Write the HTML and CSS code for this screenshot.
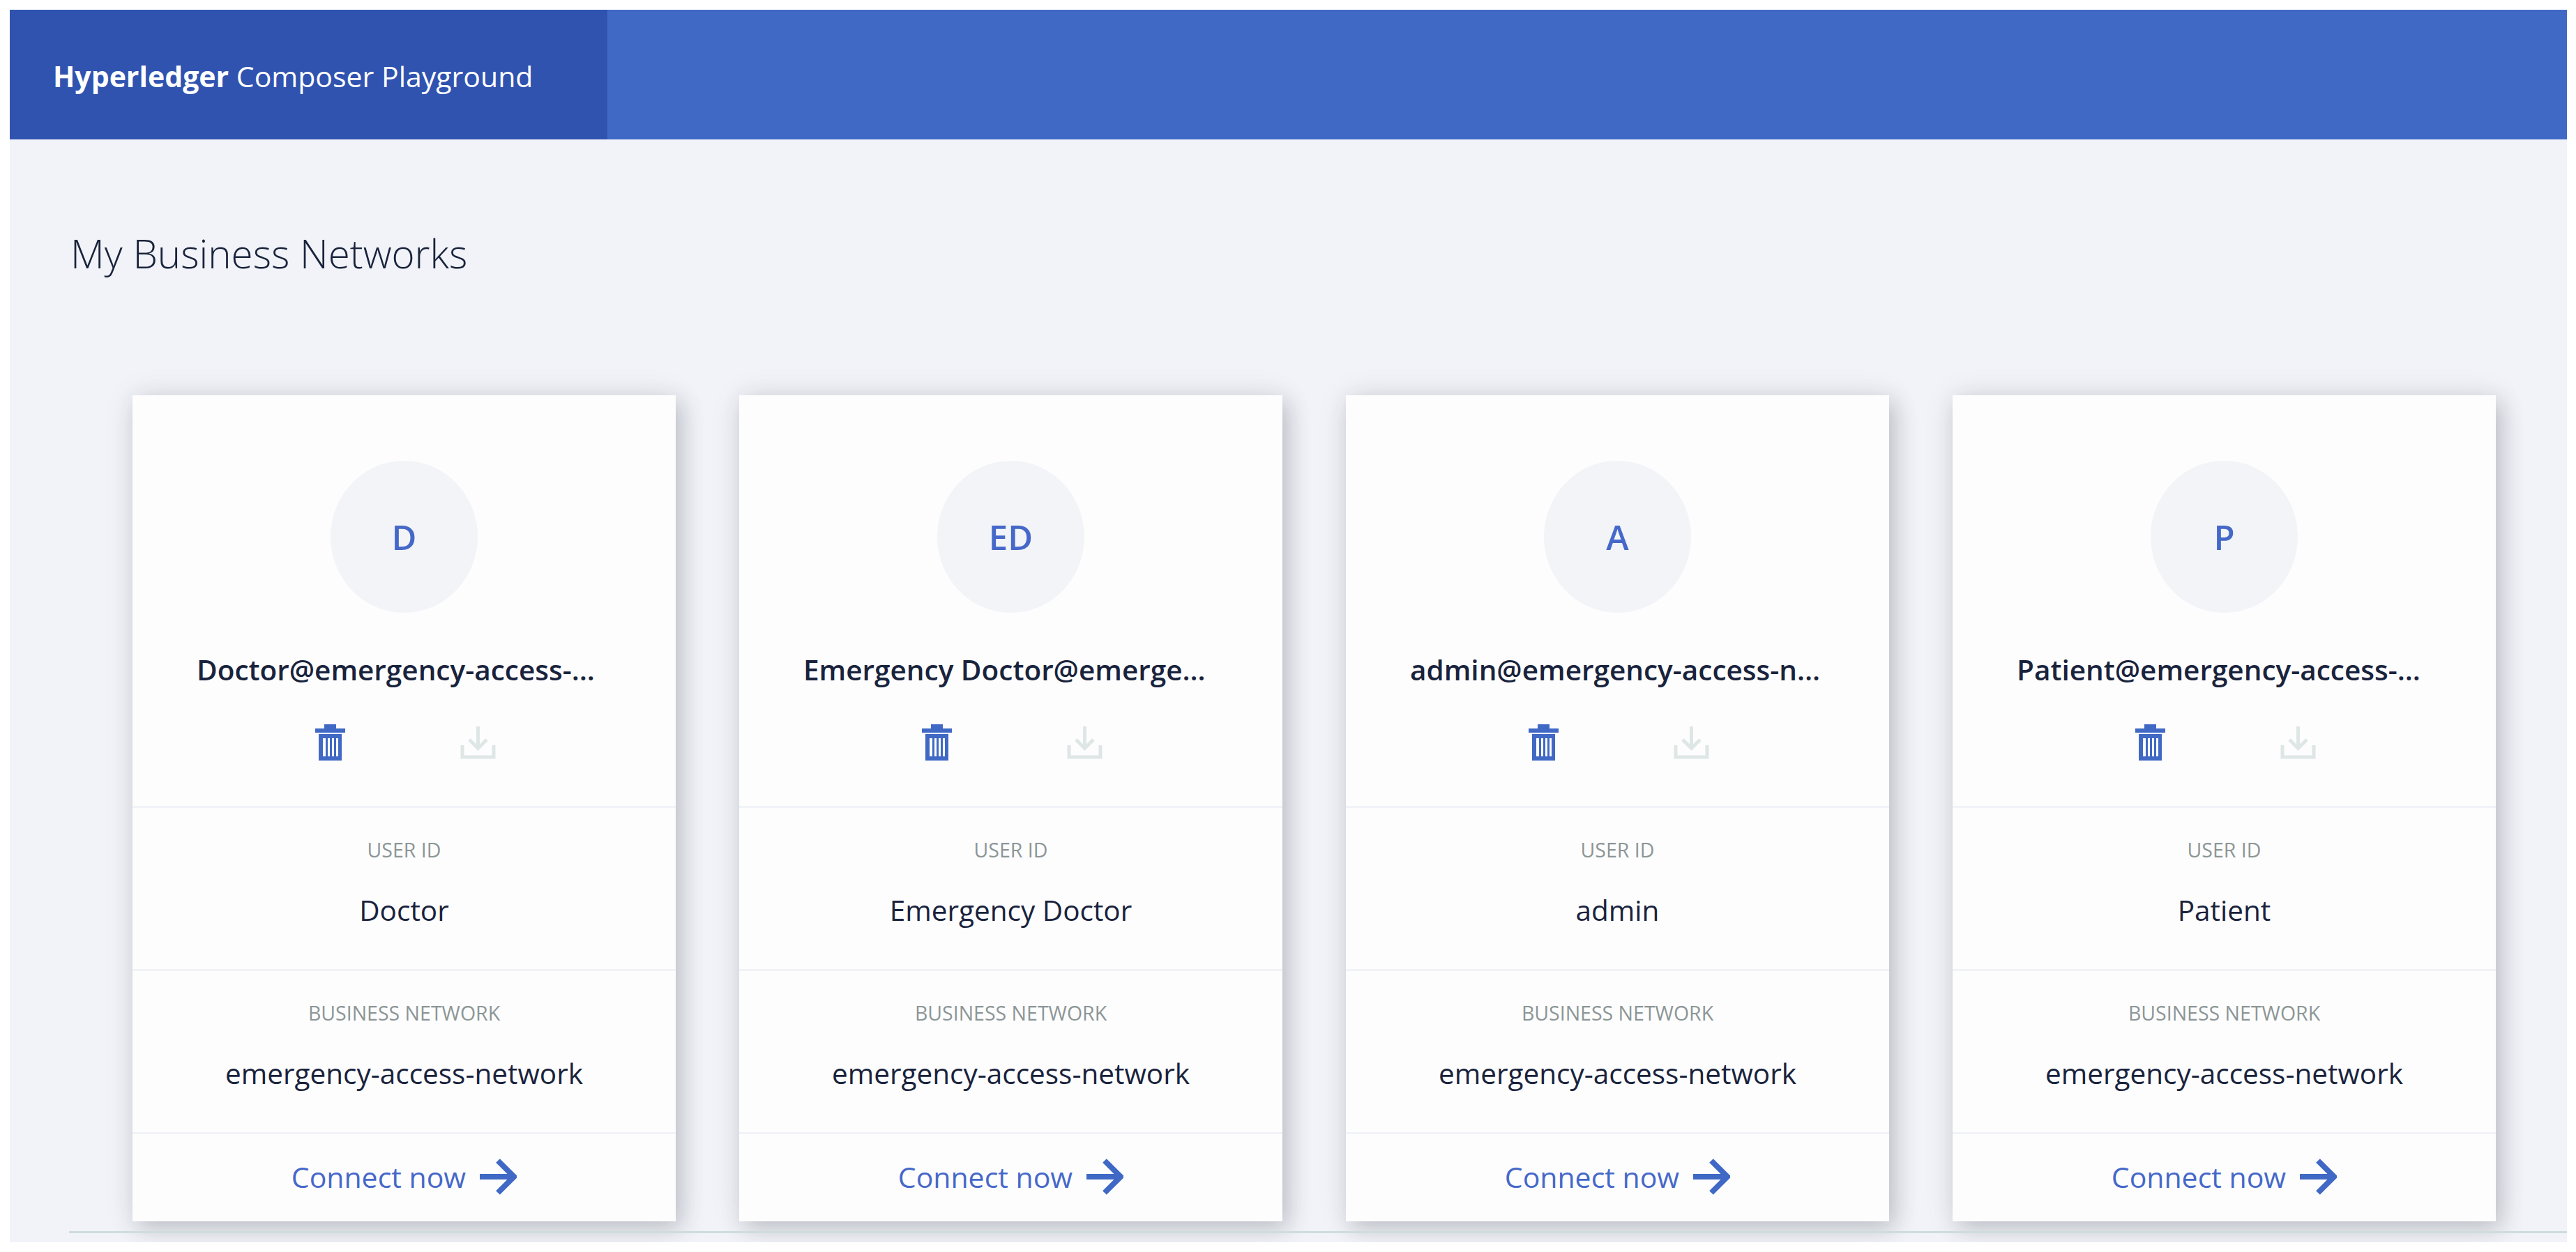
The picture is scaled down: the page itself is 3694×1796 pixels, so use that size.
FILE: index.html
```html
<!DOCTYPE html>
<html lang="en">
<head>
    <meta charset="UTF-8">
    <title>Hyperledger Composer Playground</title>
    <link rel="stylesheet" href="styles.css">
</head>
<body>
    <div class="app">
        <header class="top-bar">
            <div class="brand"><b>Hyperledger</b> Composer Playground</div>
        </header>
        <main class="content">
            <h1>My Business Networks</h1>
            <div class="cards">
                <div class="card">
                    <div class="card-top">
                        <div class="avatar">D</div>
                        <div class="card-name">Doctor@emergency-access-network</div>
                        <div class="card-icons">
                            <svg class="icon-trash" viewBox="0 0 43 52"><path d="M13 0h17v6h13v6H0V6h13zM5 14h33v38H5zM11 20v26h4V20zM18 20v26h3V20zM24 20v26h3V20zM30 20v26h3V20z" fill-rule="evenodd"/></svg>
                            <svg class="icon-download" viewBox="0 0 51 48"><path d="M25.500 1v30M13 20l12.500 12.500L38 20M3 28v17h45V28"/></svg>
                        </div>
                    </div>
                    <div class="card-row">
                        <div class="row-label">USER ID</div>
                        <div class="row-value">Doctor</div>
                    </div>
                    <div class="card-row">
                        <div class="row-label">BUSINESS NETWORK</div>
                        <div class="row-value">emergency-access-network</div>
                    </div>
                    <div class="card-connect">Connect now <svg class="icon-arrow" viewBox="0 0 53 52"><path d="M0 26h49M26 3l23 23-23 23"/></svg></div>
                </div>
                <div class="card">
                    <div class="card-top">
                        <div class="avatar">ED</div>
                        <div class="card-name">Emergency Doctor@emergency-access-network</div>
                        <div class="card-icons">
                            <svg class="icon-trash" viewBox="0 0 43 52"><path d="M13 0h17v6h13v6H0V6h13zM5 14h33v38H5zM11 20v26h4V20zM18 20v26h3V20zM24 20v26h3V20zM30 20v26h3V20z" fill-rule="evenodd"/></svg>
                            <svg class="icon-download" viewBox="0 0 51 48"><path d="M25.500 1v30M13 20l12.500 12.500L38 20M3 28v17h45V28"/></svg>
                        </div>
                    </div>
                    <div class="card-row">
                        <div class="row-label">USER ID</div>
                        <div class="row-value">Emergency Doctor</div>
                    </div>
                    <div class="card-row">
                        <div class="row-label">BUSINESS NETWORK</div>
                        <div class="row-value">emergency-access-network</div>
                    </div>
                    <div class="card-connect">Connect now <svg class="icon-arrow" viewBox="0 0 53 52"><path d="M0 26h49M26 3l23 23-23 23"/></svg></div>
                </div>
                <div class="card">
                    <div class="card-top">
                        <div class="avatar">A</div>
                        <div class="card-name">admin@emergency-access-network</div>
                        <div class="card-icons">
                            <svg class="icon-trash" viewBox="0 0 43 52"><path d="M13 0h17v6h13v6H0V6h13zM5 14h33v38H5zM11 20v26h4V20zM18 20v26h3V20zM24 20v26h3V20zM30 20v26h3V20z" fill-rule="evenodd"/></svg>
                            <svg class="icon-download" viewBox="0 0 51 48"><path d="M25.500 1v30M13 20l12.500 12.500L38 20M3 28v17h45V28"/></svg>
                        </div>
                    </div>
                    <div class="card-row">
                        <div class="row-label">USER ID</div>
                        <div class="row-value">admin</div>
                    </div>
                    <div class="card-row">
                        <div class="row-label">BUSINESS NETWORK</div>
                        <div class="row-value">emergency-access-network</div>
                    </div>
                    <div class="card-connect">Connect now <svg class="icon-arrow" viewBox="0 0 53 52"><path d="M0 26h49M26 3l23 23-23 23"/></svg></div>
                </div>
                <div class="card">
                    <div class="card-top">
                        <div class="avatar">P</div>
                        <div class="card-name">Patient@emergency-access-network</div>
                        <div class="card-icons">
                            <svg class="icon-trash" viewBox="0 0 43 52"><path d="M13 0h17v6h13v6H0V6h13zM5 14h33v38H5zM11 20v26h4V20zM18 20v26h3V20zM24 20v26h3V20zM30 20v26h3V20z" fill-rule="evenodd"/></svg>
                            <svg class="icon-download" viewBox="0 0 51 48"><path d="M25.500 1v30M13 20l12.500 12.500L38 20M3 28v17h45V28"/></svg>
                        </div>
                    </div>
                    <div class="card-row">
                        <div class="row-label">USER ID</div>
                        <div class="row-value">Patient</div>
                    </div>
                    <div class="card-row">
                        <div class="row-label">BUSINESS NETWORK</div>
                        <div class="row-value">emergency-access-network</div>
                    </div>
                    <div class="card-connect">Connect now <svg class="icon-arrow" viewBox="0 0 53 52"><path d="M0 26h49M26 3l23 23-23 23"/></svg></div>
                </div>
            </div>
            <div class="content-rule"></div>
        </main>
    </div>
</body>
</html>
```
FILE: styles.css
```css
html, body {
    height: 100%;
}
body {
    margin: 0;
    padding: 14px 13px 14px 14px;
    box-sizing: border-box;
    background-color: #fff;
    font-family: "Open Sans", sans-serif;
    color: #19233c;
}
.app {
    height: 1768px;
    display: flex;
    flex-direction: column;
    background-color: #f1f3f8;
    overflow: hidden;
}
.top-bar {
    flex: 0 0 186px;
    display: flex;
    background-color: #4068c5;
}
.brand {
    width: 857px;
    height: 186px;
    box-sizing: border-box;
    padding: 4px 0 0 62px;
    background-color: #3053b0;
    color: #fff;
    font-size: 41px;
    line-height: 182px;
    white-space: nowrap;
}
.brand b {
    font-weight: 700;
}
.content {
    flex: 1;
    display: flex;
    flex-direction: column;
}
h1 {
    margin: 125px 0 0 87px;
    height: 242px;
    font-size: 56.5px;
    line-height: 78px;
    font-weight: 300;
}
.cards {
    display: grid;
    grid-template-columns: repeat(4, 779px);
    gap: 91px;
    padding-left: 176px;
}
.card {
    height: 1185px;
    display: flex;
    flex-direction: column;
    background-color: #fdfdfe;
    box-shadow: 8px 10px 30px rgba(50, 55, 65, 0.24), 0 0 44px rgba(50, 55, 65, 0.08);
    text-align: center;
}
.card-top {
    height: 589px;
    padding-top: 94px;
    box-sizing: border-box;
}
.avatar {
    width: 211px;
    height: 218px;
    margin: 0 auto;
    border-radius: 50%;
    background-color: #f2f4f8;
    color: #4568c9;
    font-size: 49px;
    font-weight: 600;
    line-height: 218px;
}
.card-name {
    margin-top: 54px;
    padding: 0 92px;
    font-size: 40.5px;
    line-height: 56px;
    font-weight: 600;
    white-space: nowrap;
    overflow: hidden;
    text-overflow: ellipsis;
}
.card-icons {
    display: flex;
    justify-content: center;
    align-items: flex-start;
    gap: 165px;
    margin-top: 50px;
    padding-left: 4px;
}
.icon-trash {
    width: 43px;
    height: 52px;
    fill: #4068c5;
}
.icon-download {
    width: 51px;
    height: 48px;
    margin-top: 2px;
    fill: none;
    stroke: #dfe6e6;
    stroke-width: 5;
}
.card-row {
    height: 231px;
    border-top: 3px solid #f1f3f8;
}
.row-label {
    margin-top: 42px;
    color: #8c9696;
    font-size: 28.5px;
    line-height: 36px;
}
.row-value {
    margin-top: 41px;
    font-size: 40.500px;
    line-height: 56px;
}
.card-connect {
    flex: 1;
    display: flex;
    justify-content: center;
    align-items: center;
    gap: 20px;
    padding-bottom: 3px;
    border-top: 3px solid #f1f3f8;
    color: #4568c9;
    font-size: 41px;
}
.icon-arrow {
    width: 53px;
    height: 52px;
    fill: none;
    stroke: #4068c5;
    stroke-width: 8;
}
.content-rule {
    height: 3px;
    margin: 14px 0 0 85px;
    background-color: #cfdcdc;
}
```
